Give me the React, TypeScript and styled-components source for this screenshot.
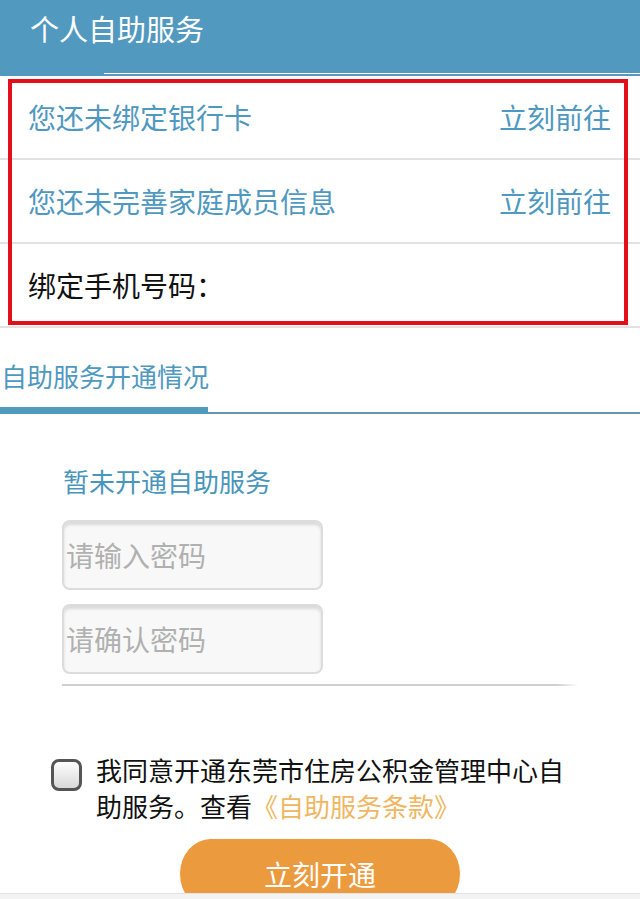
import React, { useState } from 'react';
import styled, { createGlobalStyle } from 'styled-components';

const GlobalStyle = createGlobalStyle`
  html, body {
    margin: 0;
    padding: 0;
    background: #fff;
  }
  body {
    font-family: "Noto Sans CJK SC", "Noto Sans", sans-serif;
    color: #111;
  }
  * {
    box-sizing: border-box;
  }
`;

const Page = styled.div`
  width: 640px;
  display: flex;
  flex-direction: column;
`;

const Header = styled.div`
  height: 73px;
  background: #5299c0;
  color: #fff;
  font-size: 29px;
  line-height: 40px;
  padding: 8px 0 0 30px;
`;

const HeaderEdge = styled.div`
  display: flex;
  height: 3px;
`;

const HeaderEdgeActive = styled.div`
  width: 104px;
  background: #5299c0;
`;

const HeaderEdgeRest = styled.div`
  flex: 1;
  border-top: 1px solid #fff;
  background: #5a98bb;
`;

const NoticeList = styled.div`
  position: relative;
`;

const NoticeRow = styled.div`
  height: 84px;
  display: flex;
  align-items: center;
  justify-content: space-between;
  padding: 0 29px 0 28px;
  border-bottom: 2px solid #e2e2e2;
  font-size: 28px;
  line-height: 36px;
`;

const NoticeText = styled.span<{ $plain?: boolean }>`
  color: ${p => (p.$plain ? '#111' : '#4f98bf')};
`;

const NoticeLink = styled.a`
  color: #4f98bf;
  text-decoration: none;
`;

const HighlightBox = styled.div`
  position: absolute;
  top: 3px;
  left: 8px;
  width: 620px;
  height: 246px;
  border: 4px solid #e3101b;
  pointer-events: none;
`;

const TabBar = styled.div`
  display: flex;
  border-bottom: 2px solid #6a93ae;
`;

const Tab = styled.div<{ $active?: boolean }>`
  width: 208px;
  padding: 30px 0 13px 1px;
  margin-bottom: -2px;
  font-size: 26px;
  line-height: 36px;
  white-space: nowrap;
  color: #4f98bf;
  border-bottom: 7px solid ${p => (p.$active ? '#5299c0' : 'transparent')};
`;

const Content = styled.div`
  padding: 49px 0 0 62px;
  display: flex;
  flex-direction: column;
`;

const StatusText = styled.div`
  font-size: 26px;
  line-height: 36px;
  color: #4a95bb;
  padding-left: 1px;
  margin-bottom: 21px;
`;

const PasswordInput = styled.input`
  width: 261px;
  height: 70px;
  margin-bottom: 14px;
  padding: 0 0 0 2px;
  border: 2px solid #dcdcdc;
  border-radius: 8px;
  background: #f8f8f8;
  box-shadow: inset 0 3px 3px rgba(0, 0, 0, 0.12);
  font-family: "Noto Sans CJK SC", sans-serif;
  font-size: 28px;
  color: #333;
  outline: none;

  &::placeholder {
    color: #b0b0b0;
  }

  &:last-of-type {
    margin-bottom: 0;
  }
`;

const Divider = styled.div`
  width: 516px;
  height: 2px;
  margin-top: 10px;
  background: linear-gradient(to right, #d0d0d0 96%, #fff);
`;

const Agreement = styled.label`
  display: flex;
  align-items: flex-start;
  gap: 14px;
  padding: 0 64px 0 51px;
  margin-top: 66px;
  font-size: 26px;
  line-height: 36px;
  color: #111;
`;

const CheckBox = styled.span<{ $checked: boolean }>`
  flex: none;
  width: 31px;
  height: 32px;
  margin-top: 7px;
  border: 3px solid #555;
  border-radius: 8px;
  background: ${p =>
    p.$checked ? '#5299c0' : 'linear-gradient(to bottom, #fdfdfd, #d9d9d9)'};
`;

const AgreementText = styled.span`
  flex: 1;
`;

const TermsLink = styled.a`
  color: #f0b662;
  text-decoration: none;
`;

const SubmitButton = styled.button`
  align-self: center;
  width: 280px;
  height: 70px;
  margin-top: 15px;
  border: none;
  border-radius: 35px / 40px;
  background: #ec9a3e;
  color: #fff;
  font-family: "Noto Sans CJK SC", sans-serif;
  font-size: 28px;
  cursor: pointer;
`;

const BottomStrip = styled.div`
  position: fixed;
  left: 0;
  right: 0;
  bottom: 0;
  height: 6px;
  background: #f3f3f3;
  border-top: 1px solid #e4e4e4;
`;

const App: React.FC = () => {
  const [agreed, setAgreed] = useState(false);

  return (
    <Page>
      <GlobalStyle />
      <Header>个人自助服务</Header>
      <HeaderEdge>
        <HeaderEdgeActive />
        <HeaderEdgeRest />
      </HeaderEdge>

      <NoticeList>
        <NoticeRow>
          <NoticeText>您还未绑定银行卡</NoticeText>
          <NoticeLink href="#">立刻前往</NoticeLink>
        </NoticeRow>
        <NoticeRow>
          <NoticeText>您还未完善家庭成员信息</NoticeText>
          <NoticeLink href="#">立刻前往</NoticeLink>
        </NoticeRow>
        <NoticeRow>
          <NoticeText $plain>绑定手机号码：</NoticeText>
        </NoticeRow>
        <HighlightBox />
      </NoticeList>

      <TabBar>
        <Tab $active>自助服务开通情况</Tab>
      </TabBar>

      <Content>
        <StatusText>暂未开通自助服务</StatusText>
        <PasswordInput type="password" placeholder="请输入密码" />
        <PasswordInput type="password" placeholder="请确认密码" />
        <Divider />
      </Content>

      <Agreement onClick={() => setAgreed(a => !a)}>
        <CheckBox $checked={agreed} />
        <AgreementText>
          我同意开通东莞市住房公积金管理中心自助服务。查看
          <TermsLink href="#">《自助服务条款》</TermsLink>
        </AgreementText>
      </Agreement>

      <SubmitButton type="button">立刻开通</SubmitButton>
      <BottomStrip />
    </Page>
  );
};

export default App;
